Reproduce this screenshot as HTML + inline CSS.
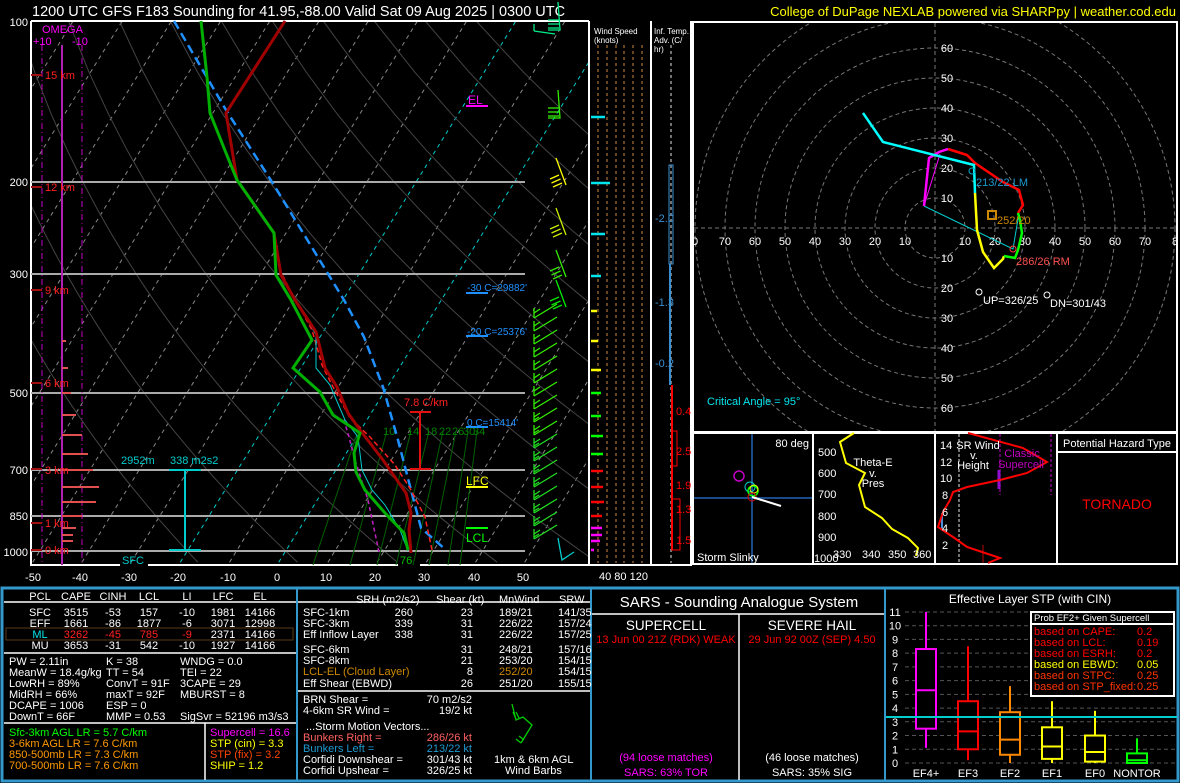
<!DOCTYPE html>
<html><head><meta charset="utf-8">
<style>
html,body{margin:0;padding:0;background:#000;}
svg{display:block;font-family:"Liberation Sans",sans-serif;}
text{font-size:11px;}
</style></head>
<body>
<svg id="s" width="1180" height="783" viewBox="0 0 1180 783" xmlns="http://www.w3.org/2000/svg">
<rect width="1180" height="783" fill="#000"/>
<defs><clipPath id="sk"><rect x="31" y="21" width="558" height="544"/></clipPath></defs>
<g id="grid" clip-path="url(#sk)"></g>

<!-- title -->
<text x="32" y="16" fill="#fff" style="font-size:14.5px">1200 UTC GFS F183 Sounding for 41.95,-88.00 Valid  Sat 09 Aug 2025 | 0300 UTC</text>
<text x="1176" y="16" fill="#ffff00" text-anchor="end" style="font-size:13px">College of DuPage NEXLAB powered via SHARPpy | weather.cod.edu</text>

<!-- skewT frame -->
<line x1="31" y1="21" x2="589" y2="21" stroke="#fff" stroke-width="2"/>
<line x1="31" y1="21" x2="31" y2="566" stroke="#fff" stroke-width="2"/>
<line x1="589" y1="21" x2="589" y2="566" stroke="#fff" stroke-width="2"/>
<line x1="31" y1="565" x2="120" y2="565" stroke="#fff" stroke-width="2"/>
<line x1="148" y1="565" x2="398" y2="565" stroke="#fff" stroke-width="2"/>
<line x1="420" y1="565" x2="589" y2="565" stroke="#fff" stroke-width="2"/>
<g stroke="#aaa" stroke-width="2">
<line x1="31" y1="182" x2="525" y2="182"/><line x1="31" y1="274" x2="525" y2="274"/>
<line x1="31" y1="393" x2="525" y2="393"/><line x1="31" y1="470" x2="525" y2="470"/>
<line x1="31" y1="516" x2="525" y2="516"/><line x1="31" y1="551" x2="525" y2="551"/>
</g>
<g fill="#fff" text-anchor="end" style="font-size:12px">
<text x="28" y="26">100</text><text x="28" y="186">200</text><text x="28" y="278">300</text>
<text x="28" y="397">500</text><text x="28" y="474">700</text><text x="28" y="520">850</text><text x="28" y="556">1000</text>
</g>
<g fill="#fff" text-anchor="middle" style="font-size:12px">
<text x="33" y="581">-50</text><text x="80" y="581">-40</text><text x="129" y="581">-30</text><text x="178" y="581">-20</text>
<text x="228" y="581">-10</text><text x="277" y="581">0</text><text x="326" y="581">10</text><text x="375" y="581">20</text>
<text x="424" y="581">30</text><text x="474" y="581">40</text><text x="523" y="581">50</text>
</g>

<!-- omega -->
<text x="42" y="33" fill="#ff00ff" style="font-size:11px">OMEGA</text>
<text x="33" y="45" fill="#ff00ff" style="font-size:11px">+10</text>
<text x="72" y="45" fill="#ff00ff" style="font-size:11px">-10</text>
<line x1="62" y1="45" x2="62" y2="565" stroke="#b020b0" stroke-width="2"/>
<line x1="42" y1="45" x2="42" y2="565" stroke="#c000c0" stroke-dasharray="6,3,1,3"/>
<line x1="82" y1="45" x2="82" y2="565" stroke="#c000c0" stroke-dasharray="6,3,1,3"/>
<g stroke="#e05050" stroke-width="2">
<line x1="62" y1="341" x2="66" y2="341"/><line x1="62" y1="368" x2="68" y2="368"/><line x1="62" y1="393" x2="71" y2="393"/>
<line x1="62" y1="415" x2="76" y2="415"/><line x1="62" y1="435" x2="82" y2="435"/><line x1="62" y1="454" x2="88" y2="454"/>
<line x1="62" y1="470" x2="93" y2="470"/><line x1="62" y1="487" x2="99" y2="487"/><line x1="62" y1="502" x2="96" y2="502"/>
<line x1="62" y1="516" x2="82" y2="516"/><line x1="62" y1="528" x2="76" y2="528"/><line x1="62" y1="535" x2="73" y2="535"/><line x1="62" y1="541" x2="73" y2="541"/>
</g>
<g fill="#ff2020" style="font-size:11px">
<text x="45" y="79">15 km</text><text x="45" y="191">12 km</text><text x="45" y="294">9 km</text>
<text x="45" y="387">6 km</text><text x="45" y="474">3 km</text><text x="45" y="527">1 km</text><text x="45" y="554">0 km</text>
</g>
<g stroke="#a01010" stroke-width="2">
<line x1="31" y1="75" x2="42" y2="75"/><line x1="31" y1="187" x2="42" y2="187"/><line x1="31" y1="290" x2="42" y2="290"/>
<line x1="31" y1="383" x2="42" y2="383"/><line x1="31" y1="469" x2="42" y2="469"/><line x1="31" y1="523" x2="42" y2="523"/><line x1="31" y1="550" x2="42" y2="550"/>
</g>

<!-- mixing ratio lines -->
<g stroke="#006000" stroke-width="1">
<line x1="313" y1="565" x2="358" y2="431"/><line x1="350" y1="565" x2="387" y2="431"/><line x1="377" y1="565" x2="411" y2="431"/>
<line x1="396" y1="565" x2="429" y2="431"/><line x1="413" y1="565" x2="443" y2="431"/><line x1="429" y1="565" x2="456" y2="431"/>
<line x1="448" y1="565" x2="468" y2="431"/><line x1="460" y1="565" x2="477" y2="431"/>
</g>
<g fill="#008000" style="font-size:9px"><text x="383" y="435">10</text><text x="407" y="435">14</text><text x="425" y="435">18</text><text x="439" y="435">22</text><text x="452" y="435">26</text><text x="463" y="435">30</text><text x="473" y="435">34</text></g>

<!-- profiles -->
<polyline fill="none" stroke="#1e90ff" stroke-width="2.5" stroke-dasharray="9,5" points="174,21 226,110 272,182 344,300 364,337 383,387 398,440 411,490 421,528 446,550"/>
<polyline fill="none" stroke="#c020c0" stroke-width="1.5" stroke-dasharray="4,3" points="379,552 368,500 355,460 349,437 343,417"/>
<polyline fill="none" stroke="#ff2020" stroke-width="1.5" stroke-dasharray="5,3" points="432,550 425,517 411,490 395,465 370,437 350,418 332,385 322,365 312,330 290,290 280,270 274,233 237,180 226,113 285,21"/>
<polyline fill="none" stroke="#00cccc" stroke-width="1" points="408,551 400,530 385,505 372,490 362,470 358,437 345,420 330,385 316,368 316,335 290,290 281,275 274,233 237,180 226,113 285,21"/>
<polyline fill="none" stroke="#a00000" stroke-width="3" points="285,21 226,113 237,180 274,233 281,275 295,300 316,332 325,368 337,387 348,413 360,430 383,460 406,493 411,513 409,530 411,553"/>
<polyline fill="none" stroke="#00b000" stroke-width="3" points="201,21 207,77 210,113 226,153 237,180 274,233 276,275 291,300 312,340 293,368 320,392 333,415 360,433 354,453 356,472 365,490 385,513 404,533 408,550"/>

<!-- annotations -->
<text x="468" y="104" fill="#ff00ff" style="font-size:12px">EL</text><line x1="466" y1="106" x2="488" y2="106" stroke="#ff00ff" stroke-width="2"/>
<text x="467" y="291" fill="#1e90ff" style="font-size:10px">-30 C=29882'</text><line x1="466" y1="293" x2="488" y2="293" stroke="#1e90ff" stroke-width="2"/>
<text x="467" y="335" fill="#1e90ff" style="font-size:10px">-20 C=25376'</text><line x1="466" y1="336" x2="488" y2="336" stroke="#1e90ff" stroke-width="2"/>
<text x="467" y="426" fill="#1e90ff" style="font-size:10px">0 C=15414'</text><line x1="466" y1="427" x2="488" y2="427" stroke="#1e90ff" stroke-width="2"/>
<text x="466" y="485" fill="#ffff00" style="font-size:12px">LFC</text><line x1="466" y1="487" x2="488" y2="487" stroke="#ffff00" stroke-width="2"/>
<text x="466" y="542" fill="#00ff00" style="font-size:12px">LCL</text><line x1="466" y1="528" x2="488" y2="528" stroke="#00ff00" stroke-width="2"/>
<text x="404" y="406" fill="#ff2020" style="font-size:11px">7.8 C/km</text>
<g stroke="#e01010" stroke-width="2"><line x1="420" y1="412" x2="420" y2="469"/><line x1="410" y1="412" x2="431" y2="412"/><line x1="410" y1="469" x2="431" y2="469"/></g>
<text x="121" y="464" fill="#00cccc" style="font-size:11px">2952m</text>
<text x="170" y="464" fill="#00cccc" style="font-size:11px">338 m2s2</text>
<g stroke="#00cccc" stroke-width="2"><line x1="185" y1="470" x2="185" y2="550"/><line x1="169" y1="470" x2="201" y2="470"/><line x1="169" y1="550" x2="201" y2="550"/></g>
<text x="122" y="564" fill="#00cccc" style="font-size:11px">SFC</text>
<text x="400" y="564" fill="#00c000" style="font-size:11px">76</text>

<g id="barbs" fill="none" stroke-width="1.3"></g>

<!-- wind speed column -->
<line x1="651" y1="21" x2="651" y2="566" stroke="#fff" stroke-width="2"/>
<line x1="691" y1="21" x2="691" y2="566" stroke="#fff" stroke-width="2"/>
<line x1="589" y1="565" x2="691" y2="565" stroke="#fff" stroke-width="2"/>
<text x="594" y="34" fill="#fff" style="font-size:8px">Wind Speed</text>
<text x="594" y="43" fill="#fff" style="font-size:8px">(knots)</text>
<g stroke="#8b5a2b" stroke-width="1.5" stroke-dasharray="3,3">
<line x1="598" y1="45" x2="598" y2="563"/><line x1="607" y1="45" x2="607" y2="563"/><line x1="616" y1="45" x2="616" y2="563"/>
<line x1="624" y1="45" x2="624" y2="563"/><line x1="633" y1="45" x2="633" y2="563"/><line x1="642" y1="45" x2="642" y2="563"/>
</g>
<text x="599" y="580" fill="#fff" style="font-size:11px">40  80 120</text>
<g stroke-width="2.5">
<line x1="591" y1="117" x2="605" y2="117" stroke="#00e5ee"/><line x1="591" y1="183" x2="610" y2="183" stroke="#00e5ee"/>
<line x1="591" y1="234" x2="605" y2="234" stroke="#00e5ee"/><line x1="591" y1="276" x2="601" y2="276" stroke="#00e5ee"/>
<line x1="591" y1="311" x2="597" y2="311" stroke="#ffff00"/><line x1="591" y1="341" x2="598" y2="341" stroke="#ffff00"/>
<line x1="591" y1="370" x2="601" y2="370" stroke="#ffff00"/><line x1="591" y1="393" x2="601" y2="393" stroke="#00ff00"/>
<line x1="591" y1="416" x2="601" y2="416" stroke="#00ff00"/><line x1="591" y1="436" x2="603" y2="436" stroke="#00ff00"/>
<line x1="591" y1="454" x2="603" y2="454" stroke="#00ff00"/><line x1="591" y1="471" x2="603" y2="471" stroke="#ff0000"/>
<line x1="591" y1="487" x2="603" y2="487" stroke="#ff0000"/><line x1="591" y1="502" x2="604" y2="502" stroke="#ff0000"/>
<line x1="591" y1="516" x2="602" y2="516" stroke="#ff0000"/><line x1="591" y1="528" x2="602" y2="528" stroke="#ff00ff"/>
<line x1="591" y1="535" x2="602" y2="535" stroke="#ff00ff"/><line x1="591" y1="541" x2="600" y2="541" stroke="#ff00ff"/><line x1="591" y1="550" x2="594" y2="550" stroke="#ff00ff"/>
</g>
<text x="654" y="34" fill="#fff" style="font-size:8px">Inf. Temp.</text>
<text x="654" y="43" fill="#fff" style="font-size:8px">Adv. (C/</text>
<text x="654" y="52" fill="#fff" style="font-size:8px">hr)</text>
<line x1="671" y1="45" x2="671" y2="563" stroke="#999" stroke-width="1.5" stroke-dasharray="3,3"/>
<rect x="669" y="165" width="4" height="99" fill="none" stroke="#3a8fd0"/>
<line x1="670" y1="264" x2="670" y2="385" stroke="#3a8fd0" stroke-width="2"/>
<line x1="672" y1="385" x2="672" y2="550" stroke="#ff0000" stroke-width="2"/>
<rect x="672" y="431" width="5" height="35" fill="none" stroke="#ff0000"/>
<rect x="672" y="499" width="8" height="51" fill="none" stroke="#ff0000"/>
<g fill="#3a8fd0" style="font-size:8px"><text x="655" y="222">-2.0</text><text x="655" y="306">-1.3</text><text x="655" y="367">-0.2</text></g>
<g fill="#ff0000" style="font-size:8px"><text x="676" y="415">0.4</text><text x="676" y="455">2.5</text><text x="676" y="489">1.9</text><text x="676" y="513">1.3</text><text x="676" y="544">1.5</text></g>

<!-- hodograph -->
<rect x="693" y="22" width="484" height="410" fill="none" stroke="#fff" stroke-width="2"/>
<defs><clipPath id="hc"><rect x="694" y="23" width="482" height="408"/></clipPath></defs>
<g clip-path="url(#hc)" fill="none" stroke="#777" stroke-dasharray="4,3">
<circle cx="935" cy="228" r="30"/><circle cx="935" cy="228" r="60"/><circle cx="935" cy="228" r="90"/><circle cx="935" cy="228" r="120"/>
<circle cx="935" cy="228" r="150"/><circle cx="935" cy="228" r="180"/><circle cx="935" cy="228" r="210"/><circle cx="935" cy="228" r="240"/>
<line x1="694" y1="228" x2="1176" y2="228"/><line x1="935" y1="23" x2="935" y2="431"/>
</g>
<g fill="#fff" style="font-size:11px" text-anchor="middle">
<text x="695" y="245">0</text><text x="725" y="245">70</text><text x="755" y="245">60</text><text x="785" y="245">50</text><text x="815" y="245">40</text>
<text x="845" y="245">30</text><text x="875" y="245">20</text><text x="905" y="245">10</text>
<text x="965" y="245">10</text><text x="995" y="245">20</text><text x="1025" y="245">30</text><text x="1055" y="245">40</text>
<text x="1085" y="245">50</text><text x="1115" y="245">60</text><text x="1145" y="245">70</text><text x="1175" y="245">8</text>
<text x="947" y="52">60</text><text x="947" y="82">50</text><text x="947" y="112">40</text><text x="947" y="142">30</text><text x="947" y="172">20</text><text x="947" y="202">10</text>
<text x="947" y="262">10</text><text x="947" y="292">20</text><text x="947" y="322">30</text><text x="947" y="352">40</text><text x="947" y="382">50</text><text x="947" y="412">60</text>
</g>
<polyline fill="none" stroke="#00cccc" stroke-width="1" points="924,206 1013,249 1019,213"/>
<line x1="924" y1="206" x2="940" y2="154" stroke="#ff00ff" stroke-width="1"/>
<polyline fill="none" stroke="#ff0000" stroke-width="2.5" points="1018,213 1023,205 1019,190 1003,182 975,163 967,155 948,149"/>
<polyline fill="none" stroke="#ff00ff" stroke-width="2.5" points="948,149 939,152 929,158 924,206"/>
<polyline fill="none" stroke="#00ffff" stroke-width="2.5" points="863,113 883,142 974,165 975,193"/>
<polyline fill="none" stroke="#ffff00" stroke-width="2.5" points="975,193 977,230 983,252 994,268 1003,259 1004,256"/>
<polyline fill="none" stroke="#00ff00" stroke-width="2.5" points="1004,256 1015,258 1018,250 1022,233 1020,220 1018,213"/>
<circle cx="972" cy="171" r="3" fill="none" stroke="#00aacc"/>
<text x="976" y="186" fill="#1e9ad0" style="font-size:11px">213/22 LM</text>
<rect x="988" y="211" width="8" height="8" fill="none" stroke="#cc8800" stroke-width="2"/>
<text x="997" y="224" fill="#cc8800" style="font-size:11px">252/20</text>
<circle cx="1013" cy="249" r="3" fill="none" stroke="#ff4040"/>
<text x="1016" y="265" fill="#ff5050" style="font-size:11px">286/26 RM</text>
<circle cx="979" cy="292" r="3" fill="none" stroke="#fff"/><text x="983" y="304" fill="#fff" style="font-size:11px">UP=326/25</text>
<circle cx="1047" cy="295" r="3" fill="none" stroke="#fff"/><text x="1050" y="307" fill="#fff" style="font-size:11px">DN=301/43</text>
<text x="707" y="405" fill="#00e5ee" style="font-size:11px">Critical Angle = 95°</text>

<!-- small panels -->
<rect x="693" y="433" width="484" height="131" fill="none" stroke="#fff" stroke-width="2"/>
<line x1="813" y1="433" x2="813" y2="564" stroke="#fff" stroke-width="2"/>
<line x1="935" y1="433" x2="935" y2="564" stroke="#fff" stroke-width="2"/>
<line x1="1057" y1="433" x2="1057" y2="564" stroke="#fff" stroke-width="2"/>
<line x1="752" y1="434" x2="752" y2="563" stroke="#1a4a8a" stroke-width="2"/>
<line x1="694" y1="498" x2="812" y2="498" stroke="#1a4a8a" stroke-width="2"/>
<text x="809" y="447" fill="#fff" text-anchor="end" style="font-size:11px">80 deg</text>
<circle cx="739" cy="476" r="5" fill="none" stroke="#c000c0" stroke-width="1.5"/>
<circle cx="750" cy="487" r="5" fill="none" stroke="#00cccc"/>
<circle cx="753" cy="491" r="5" fill="none" stroke="#00ff00" stroke-width="1.5"/>
<circle cx="754" cy="489" r="4" fill="none" stroke="#ffff00"/>
<circle cx="752" cy="497" r="4" fill="none" stroke="#e00000"/>
<line x1="752" y1="497" x2="781" y2="506" stroke="#fff" stroke-width="2"/>
<text x="697" y="561" fill="#fff" style="font-size:11px">Storm Slinky</text>

<polyline fill="none" stroke="#ffff00" stroke-width="2" points="854,433 840,442 846,463 865,473 859,485 865,507 882,518 892,529 908,538 918,548 916,556"/>
<g fill="#fff" style="font-size:9px"><text x="818" y="456">500</text><text x="818" y="477">600</text><text x="818" y="498">700</text><text x="818" y="520">800</text><text x="818" y="541">900</text><text x="814" y="562">1000</text>
<text x="833" y="558">330</text><text x="862" y="558">340</text><text x="888" y="558">350</text><text x="913" y="558">360</text></g>
<g fill="#fff" style="font-size:9px" text-anchor="middle"><text x="873" y="466">Theta-E</text><text x="873" y="477">v.</text><text x="873" y="487">Pres</text></g>

<line x1="959" y1="434" x2="959" y2="563" stroke="#999" stroke-dasharray="3,2" stroke-width="1.5"/>
<line x1="1000" y1="434" x2="1000" y2="495" stroke="#800080" stroke-dasharray="3,2" stroke-width="1.5"/>
<line x1="1051" y1="434" x2="1051" y2="495" stroke="#800080" stroke-dasharray="3,2" stroke-width="1.5"/>
<line x1="999" y1="470" x2="999" y2="489" stroke="#9010d0" stroke-width="3"/>
<line x1="942" y1="513" x2="942" y2="530" stroke="#4a90e0" stroke-width="2"/>
<line x1="983" y1="545" x2="983" y2="563" stroke="#800000" stroke-width="1.5"/>
<polyline fill="none" stroke="#ff0000" stroke-width="2" points="968,433 1023,448 1047,462 1027,473 1000,480 967,487 953,492 950,500 943,512 938,527 953,537 967,547 1000,558 988,563"/>
<g fill="#fff" style="font-size:9px"><text x="940" y="449">14</text><text x="940" y="466">12</text><text x="940" y="482">10</text><text x="942" y="499">8</text><text x="942" y="516">6</text><text x="942" y="532">4</text><text x="942" y="549">2</text></g>
<g fill="#fff" style="font-size:9px" text-anchor="middle"><text x="978" y="449">SR Wind</text><text x="974" y="459">v.</text><text x="973" y="469">Height</text></g>
<g fill="#c000c0" style="font-size:9px" text-anchor="middle"><text x="1022" y="457">Classic</text><text x="1021" y="468">Supercell</text></g>
<text x="1117" y="447" fill="#fff" text-anchor="middle" style="font-size:11px">Potential Hazard Type</text>
<line x1="1057" y1="452" x2="1177" y2="452" stroke="#fff" stroke-width="2"/>
<text x="1117" y="509" fill="#ff0000" text-anchor="middle" style="font-size:14px">TORNADO</text>

<!-- bottom panel -->
<rect x="2" y="588" width="1176" height="193" fill="none" stroke="#3399cc" stroke-width="3"/>
<line x1="297" y1="588" x2="297" y2="781" stroke="#3399cc" stroke-width="2"/>
<line x1="591" y1="588" x2="591" y2="781" stroke="#3399cc" stroke-width="2"/>
<line x1="885" y1="588" x2="885" y2="781" stroke="#3399cc" stroke-width="2"/>

<g stroke="#fff" stroke-width="1.5">
<line x1="4" y1="602" x2="296" y2="602"/><line x1="4" y1="653" x2="296" y2="653"/><line x1="4" y1="723" x2="296" y2="723"/>
<line x1="205" y1="723" x2="205" y2="780"/>
<line x1="298" y1="602" x2="590" y2="602"/><line x1="298" y1="691" x2="590" y2="691"/>
<line x1="592" y1="614" x2="884" y2="614"/><line x1="739" y1="614" x2="739" y2="780"/>
</g>
<rect x="6" y="628" width="287" height="12" fill="none" stroke="#5a3a1a" stroke-width="1"/>
<g fill="#fff" text-anchor="middle" style="font-size:11.5px">
<text x="40" y="600">PCL</text><text x="76" y="600">CAPE</text><text x="113" y="600">CINH</text><text x="149" y="600">LCL</text><text x="187" y="600">LI</text><text x="223" y="600">LFC</text><text x="260" y="600">EL</text>
<text x="40" y="616">SFC</text><text x="76" y="616">3515</text><text x="113" y="616">-53</text><text x="149" y="616">157</text><text x="187" y="616">-10</text><text x="223" y="616">1981</text><text x="260" y="616">14166</text>
<text x="40" y="627">EFF</text><text x="76" y="627">1661</text><text x="113" y="627">-86</text><text x="149" y="627">1877</text><text x="187" y="627">-6</text><text x="223" y="627">3071</text><text x="260" y="627">12998</text>
<text x="40" y="638" fill="#00e5ee">ML</text><text x="76" y="638" fill="#ff2020">3262</text><text x="113" y="638" fill="#ff2020">-45</text><text x="149" y="638" fill="#ff2020">785</text><text x="187" y="638" fill="#ff2020">-9</text><text x="223" y="638">2371</text><text x="260" y="638">14166</text>
<text x="40" y="649">MU</text><text x="76" y="649">3653</text><text x="113" y="649">-31</text><text x="149" y="649">542</text><text x="187" y="649">-10</text><text x="223" y="649">1927</text><text x="260" y="649">14166</text>
</g>
<g fill="#fff" style="font-size:11px">
<text x="9" y="665">PW = 2.11in</text><text x="106" y="665">K = 38</text><text x="180" y="665">WNDG = 0.0</text>
<text x="9" y="676">MeanW = 18.4g/kg</text><text x="106" y="676">TT = 54</text><text x="180" y="676">TEI = 22</text>
<text x="9" y="687">LowRH = 89%</text><text x="106" y="687">ConvT = 91F</text><text x="180" y="687">3CAPE = 29</text>
<text x="9" y="698">MidRH = 66%</text><text x="106" y="698">maxT = 92F</text><text x="180" y="698">MBURST = 8</text>
<text x="9" y="709">DCAPE = 1006</text><text x="106" y="709">ESP = 0</text>
<text x="9" y="720">DownT = 66F</text><text x="106" y="720">MMP = 0.53</text><text x="180" y="720">SigSvr = 52196 m3/s3</text>
</g>
<g style="font-size:11px">
<text x="9" y="736" fill="#00ff00">Sfc-3km AGL LR = 5.7 C/km</text>
<text x="9" y="747" fill="#ff9900">3-6km AGL LR = 7.6 C/km</text>
<text x="9" y="758" fill="#ff9900">850-500mb LR = 7.3 C/km</text>
<text x="9" y="769" fill="#ff9900">700-500mb LR = 7.6 C/km</text>
<text x="210" y="736" fill="#ff00ff">Supercell = 16.6</text>
<text x="210" y="747" fill="#ffff00">STP (cin) = 3.3</text>
<text x="210" y="758" fill="#ff4400">STP (fix) = 3.2</text>
<text x="210" y="769" fill="#ffff00">SHIP = 1.2</text>
</g>

<g fill="#fff" style="font-size:11px">
<text x="356" y="603">SRH (m2/s2)</text><text x="436" y="603">Shear (kt)</text><text x="499" y="603">MnWind</text><text x="559" y="603">SRW</text>
<text x="303" y="616">SFC-1km</text><text x="303" y="627">SFC-3km</text><text x="303" y="638">Eff Inflow Layer</text>
<text x="303" y="653">SFC-6km</text><text x="303" y="664">SFC-8km</text><text x="303" y="675" fill="#cc8800">LCL-EL (Cloud Layer)</text><text x="303" y="687">Eff Shear (EBWD)</text>
<text x="499" y="616">189/21</text><text x="499" y="627">226/22</text><text x="499" y="638">226/22</text><text x="499" y="653">248/21</text><text x="499" y="664">253/20</text><text x="499" y="675" fill="#cc8800">252/20</text><text x="499" y="687">251/20</text>
<text x="558" y="616">141/35</text><text x="558" y="627">157/24</text><text x="558" y="638">157/25</text><text x="558" y="653">157/16</text><text x="558" y="664">154/15</text><text x="558" y="675">154/15</text><text x="558" y="687">155/15</text>
<text x="303" y="703">BRN Shear =</text><text x="303" y="714">4-6km SR Wind =</text>
<text x="306" y="730">...Storm Motion Vectors...</text>
<text x="303" y="741" fill="#ff6060">Bunkers Right =</text><text x="303" y="752" fill="#1e9ad0">Bunkers Left =</text>
<text x="303" y="763">Corfidi Downshear =</text><text x="303" y="774">Corfidi Upshear =</text>
<text x="494" y="763">1km &amp; 6km AGL</text><text x="505" y="774">Wind Barbs</text>
</g>
<g fill="#fff" style="font-size:11px" text-anchor="end">
<text x="413" y="616">260</text><text x="413" y="627">339</text><text x="413" y="638">338</text>
<text x="473" y="616">23</text><text x="473" y="627">31</text><text x="473" y="638">31</text><text x="473" y="653">31</text><text x="473" y="664">21</text><text x="473" y="675">8</text><text x="473" y="687">26</text>
<text x="472" y="703">70 m2/s2</text><text x="472" y="714">19/2 kt</text>
<text x="472" y="741" fill="#ff6060">286/26 kt</text><text x="472" y="752" fill="#1e9ad0">213/22 kt</text>
<text x="472" y="763">301/43 kt</text><text x="472" y="774">326/25 kt</text>
</g>
<g fill="none" stroke="#00cc00" stroke-width="1.3">
<polyline points="512,704 516,720 523,717 532,725 521,743 522,741"/>
<line x1="516" y1="719" x2="513" y2="712"/><line x1="519" y1="718" x2="516" y2="712"/>
<line x1="521" y1="743" x2="516" y2="739"/><line x1="524" y1="740" x2="519" y2="736"/>
</g>

<text x="739" y="607" fill="#fff" text-anchor="middle" style="font-size:15px">SARS - Sounding Analogue System</text>
<text x="666" y="630" fill="#fff" text-anchor="middle" style="font-size:13.5px">SUPERCELL</text>
<text x="666" y="643" fill="#ff0000" text-anchor="middle" style="font-size:11px">13 Jun 00 21Z (RDK)  WEAK</text>
<text x="666" y="761" fill="#ff00ff" text-anchor="middle" style="font-size:11px">(94 loose matches)</text>
<text x="666" y="776" fill="#ff00ff" text-anchor="middle" style="font-size:11px">SARS: 63% TOR</text>
<text x="812" y="630" fill="#fff" text-anchor="middle" style="font-size:13.5px">SEVERE HAIL</text>
<text x="812" y="643" fill="#ff0000" text-anchor="middle" style="font-size:11px">29 Jun 92 00Z (SEP)   4.50</text>
<text x="812" y="761" fill="#fff" text-anchor="middle" style="font-size:11px">(46 loose matches)</text>
<text x="812" y="776" fill="#fff" text-anchor="middle" style="font-size:11px">SARS: 35% SIG</text>

<text x="1030" y="603" fill="#fff" text-anchor="middle" style="font-size:12px">Effective Layer STP (with CIN)</text>
<g id="stp"></g>
<line x1="886" y1="717" x2="1177" y2="717" stroke="#00cccc" stroke-width="2"/>
<rect x="1031" y="612" width="143" height="84" fill="#000" stroke="#fff" stroke-width="2"/>
<line x1="1031" y1="624" x2="1174" y2="624" stroke="#fff" stroke-width="2"/>
<text x="1034" y="621" fill="#fff" style="font-size:9.5px">Prob EF2+ Given Supercell</text>
<g style="font-size:10px" fill="#ff0000">
<text x="1034" y="635">based on CAPE:</text><text x="1137" y="635">0.2</text>
<text x="1034" y="646">based on LCL:</text><text x="1137" y="646">0.19</text>
<text x="1034" y="657">based on ESRH:</text><text x="1137" y="657">0.2</text>
<text x="1034" y="668" fill="#ffff00">based on EBWD:</text><text x="1137" y="668" fill="#ffff00">0.05</text>
<text x="1034" y="679" fill="#ff3300">based on STPC:</text><text x="1137" y="679" fill="#ff3300">0.25</text>
<text x="1034" y="690" fill="#ff3300">based on STP_fixed:</text><text x="1137" y="690" fill="#ff3300">0.25</text>
</g>
<g fill="#fff" style="font-size:11px" text-anchor="middle">
<text x="926" y="777">EF4+</text><text x="968" y="777">EF3</text><text x="1010" y="777">EF2</text><text x="1052" y="777">EF1</text><text x="1095" y="777">EF0</text><text x="1137" y="777">NONTOR</text>
</g>

<script>
(function(){
var NS="http://www.w3.org/2000/svg";
function el(p,n,a){var e=document.createElementNS(NS,n);for(var k in a)e.setAttribute(k,a[k]);p.appendChild(e);return e;}
var g=document.getElementById('grid');
function Y(p){return 21+530*Math.log10(p/100);}
function X(T,p){return 277+4.92*T+0.62*(565-Y(p));}
for(var T=-160;T<=50;T+=10){
  var c=(T==0||T==-20)?'#00cccc':'#888';
  el(g,'line',{x1:X(T,1050),y1:Y(1050),x2:X(T,100),y2:Y(100),stroke:c,'stroke-dasharray':'4,4','stroke-width':1});
}
for(var th=-20;th<=200;th+=20){
  var pts=[];
  for(var p=1050;p>=100;p-=25){var t=(th+273.15)*Math.pow(p/1000,0.2857)-273.15;pts.push(X(t,p).toFixed(1)+','+Y(p).toFixed(1));}
  el(g,'polyline',{points:pts.join(' '),fill:'none',stroke:'#444','stroke-width':1});
}
var b=document.getElementById('barbs');
var bl=[[30,'#00ee88',0],[118,'#33ee00',0],[183,'#ffff00',1],[233,'#ccee00',1],[275,'#33ee00',1],[305,'#00ee00',2]];
bl.forEach(function(d){
  var y=d[0],c=d[1];
  if(d[2]==0){el(b,'polyline',{points:'558,'+(y-28)+' 560,'+y+' 548,'+y,stroke:c});
    for(var i=0;i<3;i++)el(b,'line',{x1:548,y1:y-2-i*4,x2:559,y2:y-2-i*4,stroke:c});}
  else{el(b,'line',{x1:556,y1:y-25,x2:566,y2:y+2,stroke:c});
    for(var i=0;i<3;i++)el(b,'line',{x1:562-i*1.5,y1:y-8-i*4+8,x2:553-i*1.5,y2:y-4-i*4+8,stroke:c});}
});
for(var y=318;y<=548;y+=13){
  var c=y<440?'#33ee00':'#22dd22';
  el(b,'line',{x1:534,y1:y,x2:557,y2:y-14,stroke:c});
  el(b,'line',{x1:534,y1:y,x2:534,y2:y-10,stroke:c});
  el(b,'line',{x1:534,y1:y-5,x2:540,y2:y-9,stroke:c});
  if(y>420)el(b,'line',{x1:534,y1:y-2,x2:539,y2:y-5,stroke:c});
}
el(b,'polyline',{points:'558,538 562,560 574,552',stroke:'#00cccc'});
el(b,'line',{x1:534,y1:24,x2:534,y2:31,stroke:'#00ee88'});el(b,'line',{x1:534,y1:31,x2:555,y2:34,stroke:'#00ee88'});
var s=document.getElementById('stp');
function SY(v){return 763-v*13.73;}
for(var v=0;v<=11;v++){
  el(s,'line',{x1:905,y1:SY(v),x2:1176,y2:SY(v),stroke:'#555','stroke-dasharray':'4,3'});
  var t=el(s,'text',{x:895,y:SY(v)+4,fill:'#fff','text-anchor':'middle',style:'font-size:11px'});t.textContent=v;
}
var bx=[[926,1.1,11,2.5,8.3,5.3,'#ff00ff'],[968,0.2,8.5,1,4.5,2.3,'#ff0000'],[1010,0,5.6,0.6,3.7,1.7,'#ff8800'],[1052,0,4.5,0.3,2.6,1.2,'#ffff00'],[1095,0,3.8,0.1,2,0.8,'#ffff00'],[1137,0,1.8,0,0.7,0.2,'#00ff00']];
bx.forEach(function(d){
  var x=d[0],c=d[6];
  el(s,'line',{x1:x,y1:SY(d[1]),x2:x,y2:SY(d[2]),stroke:c,'stroke-width':2});
  el(s,'rect',{x:x-10,y:SY(d[4]),width:20,height:SY(d[3])-SY(d[4]),fill:'#000',stroke:c,'stroke-width':2});
  el(s,'line',{x1:x-10,y1:SY(d[5]),x2:x+10,y2:SY(d[5]),stroke:c,'stroke-width':2});
});
})();
</script>
</svg>
</body></html>
